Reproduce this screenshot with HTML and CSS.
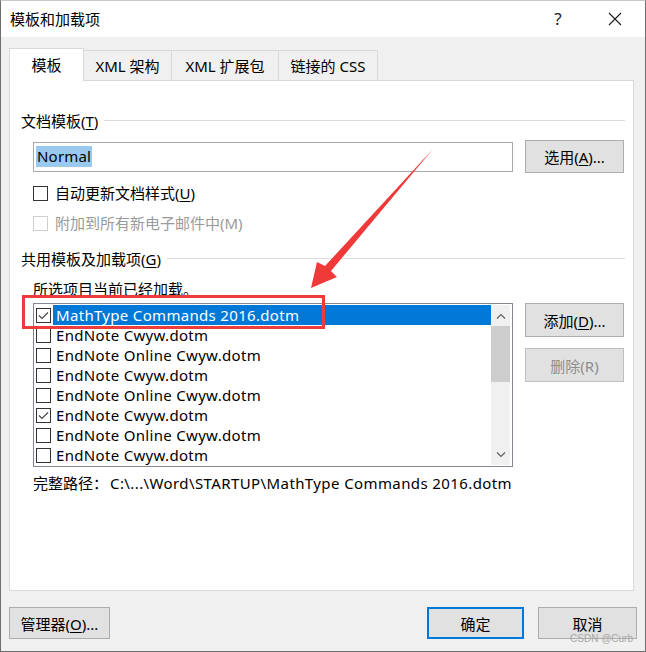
FILE: index.html
```html
<!DOCTYPE html>
<html lang="zh-CN">

<head>
    <meta charset="UTF-8">
    <meta name="viewport" content="width=device-width, initial-scale=1.0">
    <title>模板和加载项</title>
    <link rel="stylesheet" href="styles.css">
</head>

<body>
    <div class="window">
        <div class="titlebar">
            <span class="title">模板和加载项</span>
            <span class="help">?</span>
            <span class="close">
                <svg width="14" height="14" viewBox="0 0 14 14">
                    <path d="M1 1 L13 13 M13 1 L1 13" stroke="#1a1a1a" stroke-width="1.1" fill="none" />
                </svg>
            </span>
        </div>

        <div class="body">
            <div class="tabs">
                <div class="tab active">模板</div>
                <div class="tab t2">XML 架构</div>
                <div class="tab t3">XML 扩展包</div>
                <div class="tab t4">链接的 CSS</div>
            </div>

            <div class="panel">
                <div class="section first">
                    <span>文档模板(<u>T</u>)</span>
                    <i class="rule"></i>
                </div>

                <div class="indent input-row">
                    <div class="input"><span class="sel">Normal</span></div>
                    <button class="btn">选用(<u>A</u>)...</button>
                </div>

                <div class="indent check-row">
                    <span class="cb"></span>
                    <span>自动更新文档样式(<u>U</u>)</span>
                </div>
                <div class="indent check-row disabled">
                    <span class="cb"></span>
                    <span>附加到所有新电子邮件中(M)</span>
                </div>

                <div class="section second">
                    <span>共用模板及加载项(<u>G</u>)</span>
                    <i class="rule"></i>
                </div>

                <div class="indent note">所选项目当前已经加载。</div>

                <div class="indent list-row">
                    <div class="list">
                        <div class="items">
                            <div class="item selected">
                                <span class="cb checked"><svg width="13" height="13" viewBox="0 0 13 13"><path d="M2 6.5 L5 9.5 L11 3.5" stroke="#444" stroke-width="1.1" fill="none" /></svg></span>
                                <span class="name">MathType Commands 2016.dotm</span>
                            </div>
                            <div class="item"><span class="cb"></span><span class="name">EndNote Cwyw.dotm</span></div>
                            <div class="item"><span class="cb"></span><span class="name">EndNote Online Cwyw.dotm</span></div>
                            <div class="item"><span class="cb"></span><span class="name">EndNote Cwyw.dotm</span></div>
                            <div class="item"><span class="cb"></span><span class="name">EndNote Online Cwyw.dotm</span></div>
                            <div class="item">
                                <span class="cb checked"><svg width="13" height="13" viewBox="0 0 13 13"><path d="M2 6.5 L5 9.5 L11 3.5" stroke="#444" stroke-width="1.1" fill="none" /></svg></span>
                                <span class="name">EndNote Cwyw.dotm</span>
                            </div>
                            <div class="item"><span class="cb"></span><span class="name">EndNote Online Cwyw.dotm</span></div>
                            <div class="item"><span class="cb"></span><span class="name">EndNote Cwyw.dotm</span></div>
                        </div>
                        <div class="scrollbar">
                            <div class="arrow-btn">
                                <svg width="10" height="6" viewBox="0 0 10 6"><path d="M1 5.5 L5 1.5 L9 5.5" stroke="#606060" stroke-width="1.2" fill="none" /></svg>
                            </div>
                            <div class="thumb"></div>
                            <div class="track"></div>
                            <div class="arrow-btn">
                                <svg width="10" height="6" viewBox="0 0 10 6"><path d="M1 0.5 L5 4.5 L9 0.5" stroke="#606060" stroke-width="1.2" fill="none" /></svg>
                            </div>
                        </div>
                    </div>
                    <div class="side-btns">
                        <button class="btn">添加(<u>D</u>)...</button>
                        <button class="btn off">删除(R)</button>
                    </div>
                </div>

                <div class="indent path">
                    <span>完整路径：</span>
                    <span class="path-val">C:\...\Word\STARTUP\MathType Commands 2016.dotm</span>
                </div>
            </div>

            <div class="footer">
                <button class="btn manage">管理器(<u>O</u>)...</button>
                <button class="btn ok">确定</button>
                <button class="btn cancel">取消</button>
            </div>
        </div>

        <!-- annotation drawn over the dialog -->
        <svg class="arrow" width="646" height="652" viewBox="0 0 646 652">
            <polygon points="433,149 331,271 337,277 311,288 317,262 325,266" fill="#f03a3a" />
        </svg>
        <div class="mark"></div>
        <div class="watermark">CSDN @Curb</div>
    </div>
</body>

</html>
```

FILE: styles.css
```css
* {
    margin: 0;
    padding: 0;
    box-sizing: border-box;
}

body {
    font-family: "Noto Sans", "Noto Sans CJK SC", sans-serif;
    font-size: 15px;
    line-height: 20px;
    color: #000;
    background-color: #fff;
}

u {
    text-decoration: underline;
    text-underline-offset: 2px;
}

.window {
    position: relative;
    width: 646px;
    height: 652px;
    border: 1px solid #6e6e6e;
    border-top-color: #c8c8c8;
    overflow: hidden;
}

.titlebar {
    height: 36px;
    background-color: #fff;
    display: flex;
    align-items: center;
    padding-left: 9px;
}

.title {
    flex: 1;
}

.help {
    width: 20px;
    text-align: center;
    font-size: 17px;
    color: #222;
    margin-right: 40px;
}

.close {
    display: flex;
    width: 14px;
    margin-right: 23px;
}

.body {
    height: 614px;
    background-color: #f0f0f0;
}

.tabs {
    display: flex;
    align-items: flex-end;
    height: 43px;
    padding-left: 8px;
}

.tab {
    height: 30px;
    border: 1px solid #d9d9d9;
    border-bottom: none;
    margin-left: -1px;
    display: flex;
    align-items: center;
    justify-content: center;
    background-color: #f0f0f0;
}

.tab.active {
    height: 33px;
    width: 75px;
    margin-left: 0;
    margin-bottom: -1px;
    background-color: #fff;
    position: relative;
    z-index: 1;
}

.t2 {
    width: 89px;
}

.t3 {
    width: 108px;
}

.t4 {
    width: 100px;
}

.panel {
    height: 511px;
    margin: 0 11px 0 8px;
    background-color: #fff;
    border: 1px solid #d9d9d9;
    padding: 0 8px 0 11px;
}

.section {
    display: flex;
    align-items: center;
    height: 20px;
}

.section.first {
    margin-top: 30px;
}

.section.second {
    margin-top: 16px;
}

.rule {
    flex: 1;
    height: 1px;
    margin-left: 6px;
    margin-top: -2px;
    background-color: #dcdcdc;
}

.indent {
    margin-left: 12px;
}

.input-row {
    display: flex;
    height: 33px;
    margin-top: 9px;
}

.input {
    width: 480px;
    height: 30px;
    margin-top: 2px;
    border: 1px solid #a9a9a9;
    padding: 3px 0 0 2px;
}

.sel {
    display: inline-block;
    background-color: #99c9ef;
    padding: 0 1px;
    line-height: 21px;
    letter-spacing: 0.2px;
}

.btn {
    font-family: inherit;
    font-size: 15px;
    color: #000;
    background-color: #e1e1e1;
    border: 1px solid #adadad;
}

.input-row .btn {
    width: 99px;
    height: 33px;
    margin-left: 12px;
}

.check-row {
    display: flex;
    align-items: center;
    height: 20px;
    margin-top: 10px;
}

.cb {
    width: 15px;
    height: 15px;
    border: 1px solid #333;
    background-color: #fff;
    margin-right: 7px;
    display: flex;
    align-items: center;
    justify-content: center;
}

.disabled {
    color: #9a9a9a;
}

.disabled .cb {
    border-color: #cfcfcf;
}

.note {
    height: 20px;
    margin-top: 10px;
}

.list-row {
    display: flex;
    margin-top: 4px;
}

.list {
    width: 480px;
    height: 164px;
    border: 1px solid #828790;
    padding: 1px;
    display: flex;
}

.items {
    flex: 1;
}

.item {
    display: flex;
    align-items: center;
    height: 20px;
    padding-left: 1px;
}

.item .cb {
    margin-right: 2px;
}

.name {
    flex: 1;
    height: 20px;
    padding-left: 3px;
    white-space: nowrap;
    letter-spacing: 0.32px;
}

.selected .name {
    background-color: #0078d7;
    color: #fff;
}

.scrollbar {
    width: 19px;
    margin-right: 1px;
    background-color: #f0f0f0;
    display: flex;
    flex-direction: column;
}

.arrow-btn {
    height: 21px;
    display: flex;
    align-items: center;
    justify-content: center;
}

.thumb {
    height: 56px;
    background-color: #cdcdcd;
}

.track {
    flex: 1;
}

.side-btns {
    display: flex;
    flex-direction: column;
    gap: 11px;
    margin-left: 12px;
}

.side-btns .btn {
    width: 99px;
    height: 34px;
}

.btn.off {
    color: #8d8d8d;
    border-color: #bfbfbf;
}

.path {
    height: 20px;
    margin-top: 6px;
    display: flex;
}

.path-val {
    margin-left: 2px;
    letter-spacing: 0.4px;
    white-space: nowrap;
}

.footer {
    display: flex;
    margin-top: 16px;
    padding: 0 8px;
}

.footer .btn {
    height: 32px;
}

.manage {
    width: 101px;
}

.ok {
    width: 97px;
    margin-left: auto;
    border: 2px solid #0078d7;
}

.cancel {
    width: 99px;
    margin-left: 14px;
}

.arrow {
    position: absolute;
    left: -1px;
    top: -1px;
    pointer-events: none;
}

.mark {
    position: absolute;
    left: 21px;
    top: 294px;
    width: 303px;
    height: 34px;
    border: 3px solid #ee3b3b;
}

.watermark {
    position: absolute;
    right: 12px;
    bottom: 6px;
    font-size: 10px;
    line-height: 12px;
    color: #a8a8a8;
    font-family: "Liberation Sans", sans-serif;
}
```
